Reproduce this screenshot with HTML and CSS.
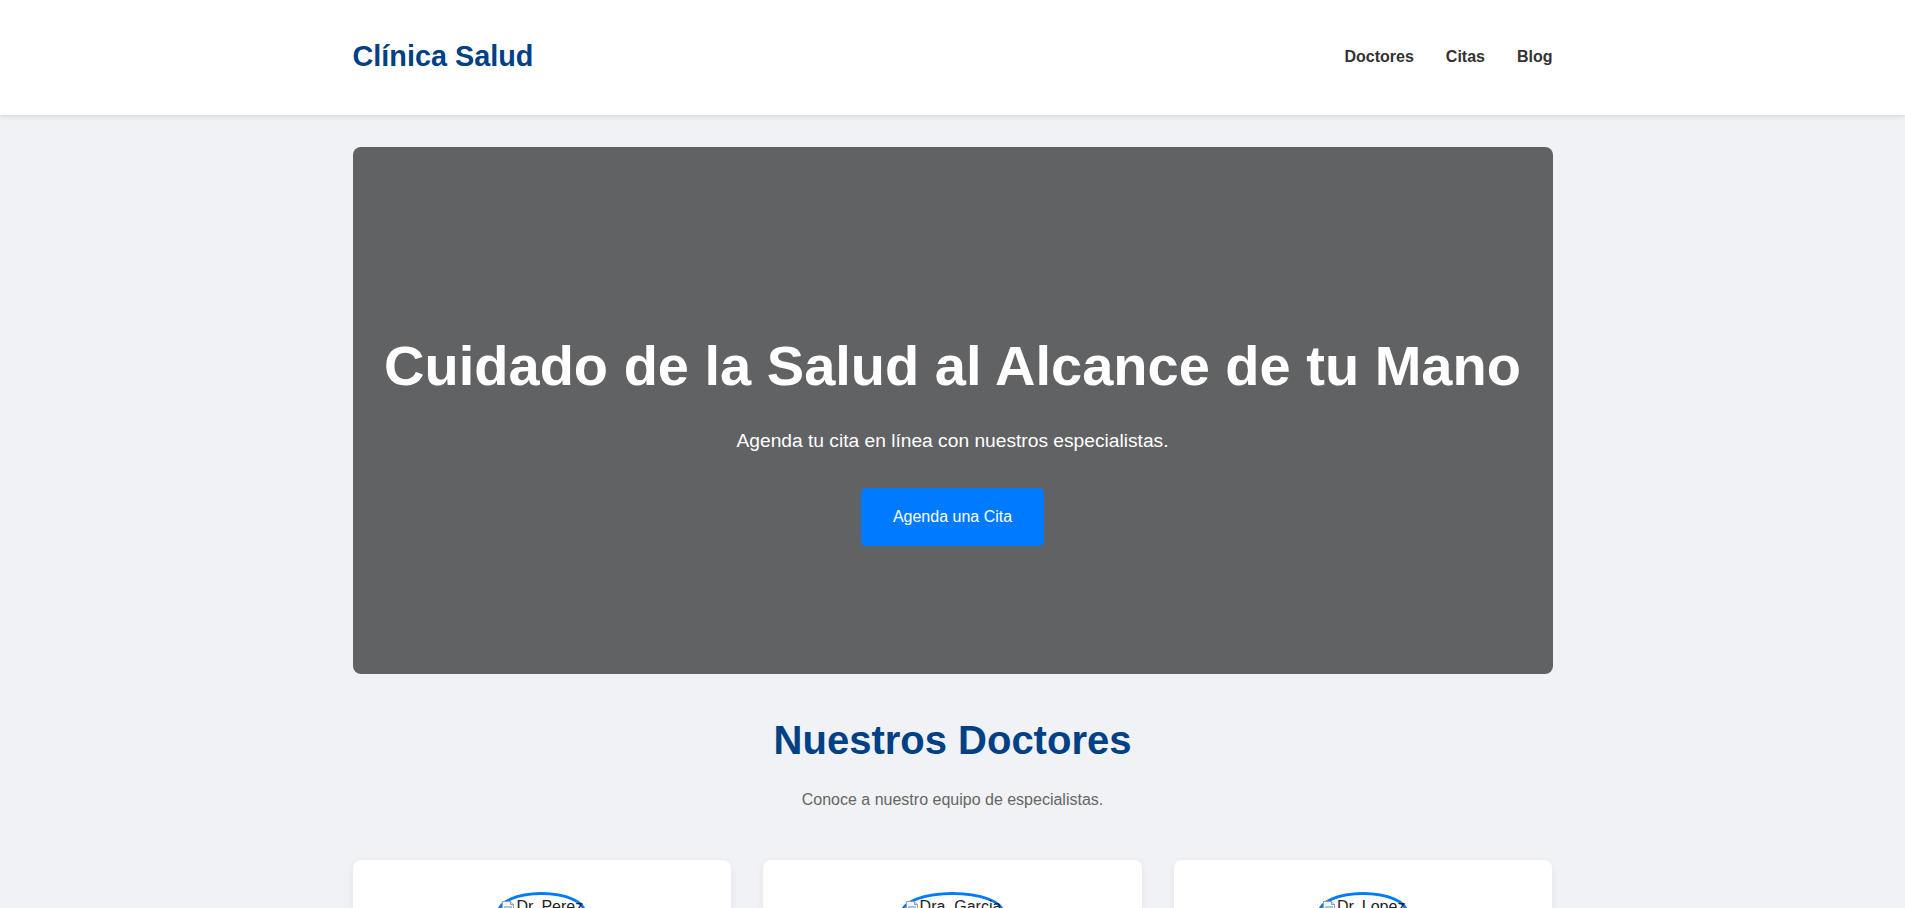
FILE: index.html
```html
<!DOCTYPE html>
<html lang="es">
<head>
<meta charset="utf-8">
<title>Clínica Salud</title>
<link rel="stylesheet" href="styles.css">
</head>
<body>
<header class="site-header">
  <div class="container header-inner">
    <a class="logo" href="#">Clínica Salud</a>
    <nav class="nav">
      <a href="#doctores">Doctores</a>
      <a href="#citas">Citas</a>
      <a href="#blog">Blog</a>
    </nav>
  </div>
</header>

<main class="container main">
  <section class="hero">
    <h1 class="hero-title">Cuidado de la Salud al Alcance de tu Mano</h1>
    <p class="hero-sub">Agenda tu cita en línea con nuestros especialistas.</p>
    <a class="btn" href="#citas">Agenda una Cita</a>
  </section>

  <section class="doctors" id="doctores">
    <h2 class="section-title">Nuestros Doctores</h2>
    <p class="section-sub">Conoce a nuestro equipo de especialistas.</p>
    <div class="cards">
      <article class="card">
        <span class="avatar"><svg class="broken" viewBox="0 0 16 16" width="16" height="16"><path d="M2.5 1.5h8l3 3v10h-11z" fill="#f4f4f4" stroke="#9a9a9a"/><path d="M10.5 1.5v3h3" fill="#e0e0e0" stroke="#9a9a9a"/><rect x="4" y="6" width="8" height="6" fill="#9cc8ef"/><path d="M4 12l3-3.5 2 2 1.5-1.5 1.5 3z" fill="#3c9a3c"/></svg><span class="alt">Dr. Perez</span></span>
        <h3 class="card-name">Dr. Perez</h3>
        <p class="card-role">Cardiología</p>
      </article>
      <article class="card">
        <span class="avatar"><svg class="broken" viewBox="0 0 16 16" width="16" height="16"><path d="M2.5 1.5h8l3 3v10h-11z" fill="#f4f4f4" stroke="#9a9a9a"/><path d="M10.5 1.5v3h3" fill="#e0e0e0" stroke="#9a9a9a"/><rect x="4" y="6" width="8" height="6" fill="#9cc8ef"/><path d="M4 12l3-3.5 2 2 1.5-1.5 1.5 3z" fill="#3c9a3c"/></svg><span class="alt">Dra. Garcia</span></span>
        <h3 class="card-name">Dra. Garcia</h3>
        <p class="card-role">Pediatría</p>
      </article>
      <article class="card">
        <span class="avatar"><svg class="broken" viewBox="0 0 16 16" width="16" height="16"><path d="M2.5 1.5h8l3 3v10h-11z" fill="#f4f4f4" stroke="#9a9a9a"/><path d="M10.5 1.5v3h3" fill="#e0e0e0" stroke="#9a9a9a"/><rect x="4" y="6" width="8" height="6" fill="#9cc8ef"/><path d="M4 12l3-3.5 2 2 1.5-1.5 1.5 3z" fill="#3c9a3c"/></svg><span class="alt">Dr. Lopez</span></span>
        <h3 class="card-name">Dr. Lopez</h3>
        <p class="card-role">Dermatología</p>
      </article>
    </div>
  </section>
</main>
</body>
</html>
```

FILE: styles.css
```css
* {
  box-sizing: border-box;
}

html, body {
  margin: 0;
  padding: 0;
}

body {
  font-family: "Liberation Sans", Arial, sans-serif;
  background: #f0f2f5;
  color: #333;
  line-height: 1.6;
}

a {
  text-decoration: none;
}

.container {
  max-width: 1200px;
  margin: 0 auto;
}

.site-header {
  background: #fff;
  box-shadow: 0 2px 4px rgba(0, 0, 0, 0.1);
  padding: 33px 0 36px;
}

.header-inner {
  display: flex;
  justify-content: space-between;
  align-items: center;
}

.logo {
  font-size: 1.8rem;
  font-weight: bold;
  color: #004085;
}

.nav {
  display: flex;
  gap: 2rem;
  padding-top: 1px;
}

.nav a {
  color: #333;
  font-weight: bold;
  font-size: 16px;
}

.main {
  padding-top: 32px;
}

.hero {
  background: #616264;
  border-radius: 8px;
  color: #fff;
  text-align: center;
  padding: 185px 0.5rem 128px;
}

.hero-title {
  font-size: 3.5rem;
  line-height: 1.2;
  margin: 0 0 27px;
  white-space: nowrap;
}

.hero-sub {
  font-size: 1.2rem;
  margin: 0 0 31px;
}

.btn {
  display: inline-block;
  background: #007bff;
  color: #fff;
  font-size: 16px;
  padding: 1rem 2rem;
  border-radius: 5px;
  vertical-align: top;
}

.doctors {
  text-align: center;
  padding-top: 42px;
}

.section-title {
  font-size: 2.5rem;
  line-height: 1.2;
  color: #004085;
  margin: 0 0 23px;
}

.section-sub {
  color: #666;
  font-size: 16px;
  margin: 0 0 48px;
}

.cards {
  display: grid;
  grid-template-columns: repeat(3, 1fr);
  gap: 2rem;
}

.card {
  background: #fff;
  border-radius: 8px;
  box-shadow: 0 2px 8px rgba(0, 0, 0, 0.06);
  padding: 2rem;
  text-align: center;
}

.avatar {
  display: inline-flex;
  align-items: flex-start;
  height: 40px;
  padding-top: 4px;
  border: 3px solid #007bff;
  border-radius: 50%;
  font-size: 16px;
  line-height: 16px;
  color: #222;
}

.broken {
  flex: none;
  display: block;
  margin-top: 1px;
}

.alt {
  white-space: nowrap;
}

.card-name {
  color: #004085;
  font-size: 1.3rem;
  margin: 1rem 0 0.3rem;
}

.card-role {
  color: #666;
  margin: 0;
}
```
